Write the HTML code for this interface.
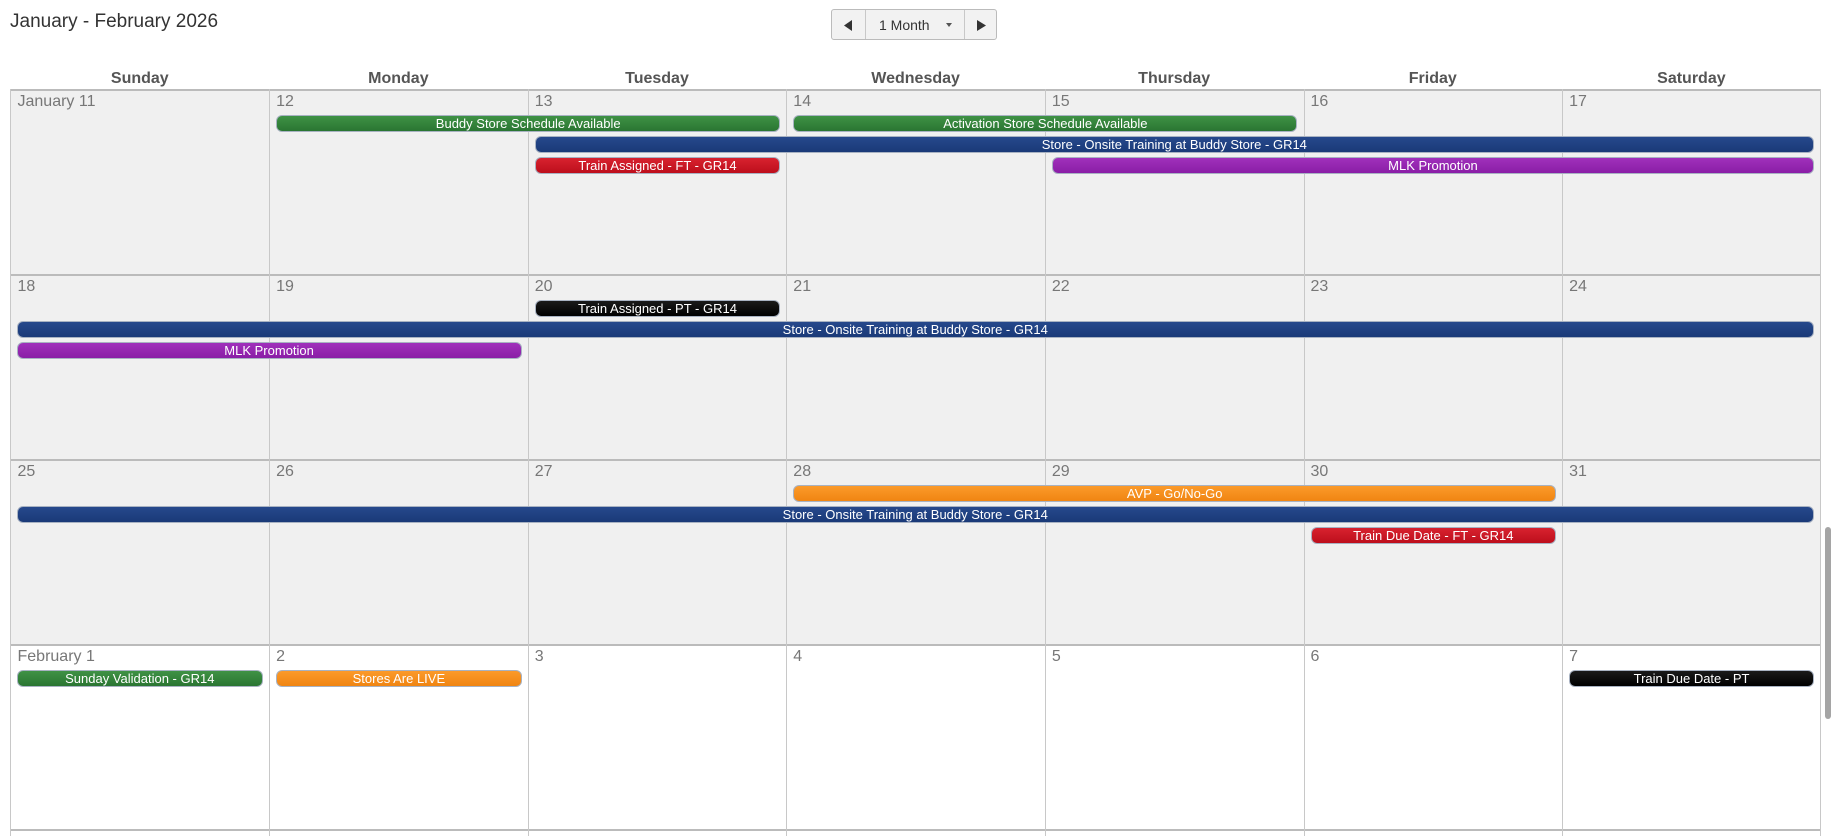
<!DOCTYPE html>
<html style="width:1832px;height:836px;overflow:hidden"><head><meta charset="utf-8"><style>
*{margin:0;padding:0;box-sizing:border-box}
body{width:1832px;height:836px;overflow:hidden;background:#fff;font-family:"Liberation Sans",sans-serif;position:relative}
.a{position:absolute}
.title{left:10px;top:11px;font-size:19px;color:#333}
.btn{left:831px;top:9px;width:166px;height:31px;border:1px solid #bbb;border-radius:3px;background:#f2f2f2}
.btn .d{position:absolute;top:0;bottom:0;width:1px;background:#c8c8c8}
.hd{top:70px;width:258.6px;text-align:center;font-weight:bold;font-size:16px;color:#555}
.row{left:10.5px;width:1810px;border-top:2px solid #bbb}
.vl{width:1px;background:#c8c8c8}
.num{font-size:16px;color:#777}
.ev{height:17px;border-radius:6px;border:1px solid #a8b2c2;color:#fff;font-size:13px;line-height:15px;text-align:center;white-space:nowrap;overflow:hidden}
.g{background:linear-gradient(#3f9245,#2a7532)}
.b{background:linear-gradient(#26498c,#1a3a78)}
.r{background:linear-gradient(#d8222f,#bd0f1c)}
.p{background:linear-gradient(#a030bb,#8a1ea6)}
.o{background:linear-gradient(#fb9a2a,#f08512)}
.k{background:linear-gradient(#1a1a1a,#000)}
</style></head><body>
<div class="a title">January - February 2026</div>
<div class="a btn">
 <div class="d" style="left:33px"></div><div class="d" style="left:132px"></div>
 <svg class="a" style="left:12px;top:10px" width="9" height="11"><path d="M8 0L0 5.5 8 11Z" fill="#333"/></svg>
 <div class="a" style="left:47px;top:7px;font-size:14px;color:#333">1 Month</div>
 <svg class="a" style="left:114px;top:13px" width="6" height="4"><path d="M0 0H6L3 4Z" fill="#555"/></svg>
 <svg class="a" style="left:145px;top:10px" width="9" height="11"><path d="M0 0L9 5.5 0 11Z" fill="#333"/></svg>
</div>
<div id="c"></div>
<div class="a" style="left:1825px;top:527px;width:6px;height:192px;background:#a5a5a5;border-radius:3px"></div>
<script>
var h='',L=10.5,W=258.6,days=['Sunday','Monday','Tuesday','Wednesday','Thursday','Friday','Saturday'];
days.forEach(function(d,i){h+='<div class="a hd" style="left:'+(L+i*W)+'px">'+d+'</div>';});
var tops=[89,274,459,644,829];
var nums=[['January 11',12,13,14,15,16,17],[18,19,20,21,22,23,24],[25,26,27,28,29,30,31],['February 1',2,3,4,5,6,7],[8,9,10,11,12,13,14]];
tops.forEach(function(t,r){
 var hh=r<4?186:7;
 h+='<div class="a row" style="top:'+t+'px;height:'+hh+'px;background:'+(r<3?'#f0f0f0':'#fff')+'"></div>';
 for(var i=1;i<7;i++)h+='<div class="a vl" style="left:'+Math.round(L+i*W)+'px;top:'+t+'px;height:'+hh+'px"></div>';
 h+='<div class="a vl" style="left:10px;top:'+t+'px;height:'+hh+'px"></div><div class="a vl" style="left:1820px;top:'+t+'px;height:'+hh+'px"></div>';
 if(r<4)for(var i=0;i<7;i++)h+='<div class="a num" style="left:'+(L+i*W+7)+'px;top:'+(t+4)+'px">'+nums[r][i]+'</div>';
});
function ev(r,c,n,s,cls,txt,st,en){
 var l=st?16.5:L+c*W+7, rt=en?1814:L+(c+n)*W-6, t=tops[r]+26+s*21;
 h+='<div class="a ev '+cls+'" style="left:'+l+'px;top:'+t+'px;width:'+(rt-l)+'px">'+txt+'</div>';
}
ev(0,1,2,0,'g','Buddy Store Schedule Available');
ev(0,3,2,0,'g','Activation Store Schedule Available');
ev(0,2,5,1,'b','Store - Onsite Training at Buddy Store - GR14',0,1);
ev(0,2,1,2,'r','Train Assigned - FT - GR14');
ev(0,4,3,2,'p','MLK Promotion',0,1);
ev(1,2,1,0,'k','Train Assigned - PT - GR14');
ev(1,0,7,1,'b','Store - Onsite Training at Buddy Store - GR14',1,1);
ev(1,0,2,2,'p','MLK Promotion',1);
ev(2,3,3,0,'o','AVP - Go/No-Go');
ev(2,0,7,1,'b','Store - Onsite Training at Buddy Store - GR14',1,1);
ev(2,5,1,2,'r','Train Due Date - FT - GR14');
ev(3,0,1,0,'g','Sunday Validation - GR14',1);
ev(3,1,1,0,'o','Stores Are LIVE');
ev(3,6,1,0,'k','Train Due Date - PT',0,1);
document.getElementById('c').innerHTML=h;
</script>
</body></html>
